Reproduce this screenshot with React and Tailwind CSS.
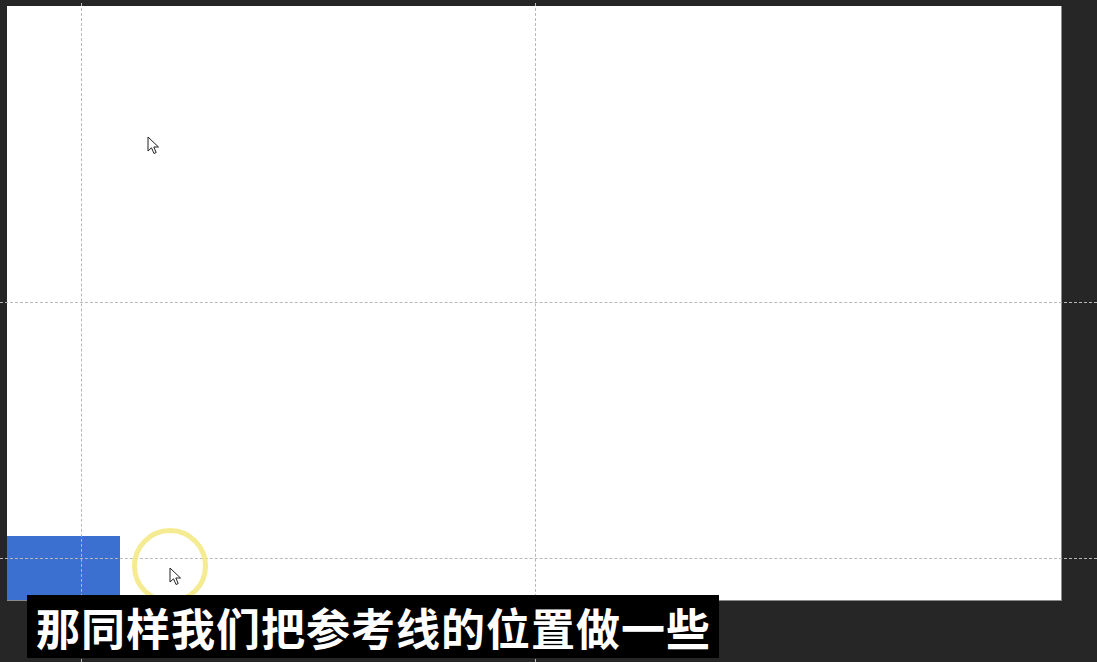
import React from "react";

function Pointer({ className }) {
  return (
    <svg className={className} width="13" height="19" viewBox="0 0 13 19">
      <path
        d="M1 1 L1 15 L4.5 11.8 L7 17.5 L9.2 16.5 L6.8 11 L11.5 11 Z"
        fill="#fff"
        stroke="#222"
        strokeWidth="1"
        strokeLinejoin="round"
      />
    </svg>
  );
}

export default function App() {
  return (
    <div className="relative w-[1097px] h-[662px] overflow-hidden bg-[#262626] pt-[6px] pl-[7px]">
      {/* artboard */}
      <div className="w-[1055px] h-[595px] bg-white border-r border-b border-[#8a8a8a] flex items-end">
        <div className="w-[113px] h-[64px] bg-[#3b6fd0]" />
      </div>

      {/* guides */}
      <div className="absolute left-[81px] top-[3px] bottom-0 border-l border-dashed border-[#b8b8b8]" />
      <div className="absolute left-[535px] top-[3px] bottom-0 border-l border-dashed border-[#b8b8b8]" />
      <div className="absolute top-[302px] left-0 right-0 border-t border-dashed border-[#b8b8b8]" />
      <div className="absolute top-[558px] left-0 right-0 border-t border-dashed border-[#b8b8b8]" />

      {/* click highlight + cursors */}
      <div className="absolute left-[132px] top-[528px] w-[76px] h-[76px] rounded-full border-[5px] border-[#f3e77f]/85" />
      <Pointer className="absolute left-[147px] top-[136px]" />
      <Pointer className="absolute left-[169px] top-[567px]" />

      {/* subtitle */}
      <div className="absolute left-[27px] top-[595px] h-[63px] w-[692px] bg-black flex items-center pl-[9px]">
        <span className="text-white font-bold text-[44px] leading-none tracking-[1px] font-['Noto_Sans_CJK_SC',sans-serif]">
          那同样我们把参考线的位置做一些
        </span>
      </div>
    </div>
  );
}
